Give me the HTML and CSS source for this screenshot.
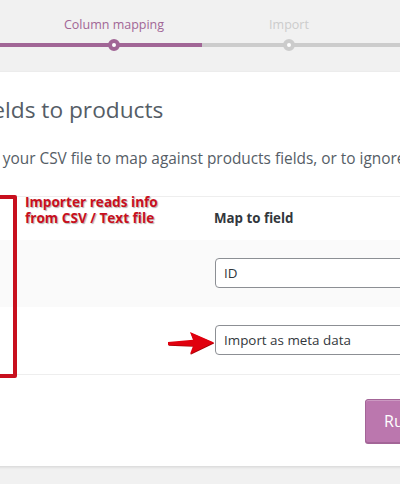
FILE: index.html
```html
<!DOCTYPE html>
<html lang="en">
<head>
<meta charset="utf-8">
<title>Product import - Column mapping</title>
<link rel="stylesheet" href="styles.css">
</head>
<body>
<div class="page">
  <ol class="steps">
    <li class="step done">Upload CSV file</li>
    <li class="step active">Column mapping</li>
    <li class="step">Import</li>
    <li class="step">Done!</li>
  </ol>

  <div class="card">
    <header class="card-head">
      <h2 class="title">Map CSV fields to products</h2>
      <p class="intro">Select fields from your CSV file to map against products fields, or to ignore during import.</p>
    </header>

    <table class="map">
      <thead>
        <tr>
          <th class="col-name">Column name</th>
          <th class="col-field">Map to field</th>
        </tr>
      </thead>
      <tbody>
        <tr class="odd">
          <td class="col-name"></td>
          <td class="col-field"><div class="select">ID</div></td>
        </tr>
        <tr>
          <td class="col-name"></td>
          <td class="col-field"><div class="select">Import as meta data</div></td>
        </tr>
      </tbody>
    </table>

    <div class="actions">
      <button class="btn" type="button">Run the importer</button>
    </div>
  </div>

  <div class="bracket"></div>
  <div class="note">Importer reads info<br>from CSV / Text file</div>
  <svg class="arrow" width="46" height="24" viewBox="0 0 46 24" aria-hidden="true">
    <polygon points="0,11 25,8.8 22,1 46,11.5 22,23 25,15 0,14" fill="#a80006" transform="translate(0.6,0.8)"/>
    <polygon points="0,11 25,8.8 22,1 46,11.5 22,23 25,15 0,14" fill="#e0000e"/>
  </svg>
</div>
</body>
</html>
```

FILE: styles.css
```css
*, *::before, *::after { box-sizing: border-box; }

html, body {
  margin: 0;
  padding: 0;
}

body {
  background: #f1f1f1;
  font-family: "Open Sans", "Noto Sans", sans-serif;
  color: #555d66;
  width: 400px;
  height: 484px;
  overflow: hidden;
}

.page {
  position: relative;
  width: 400px;
  height: 484px;
  overflow: hidden;
}

/* progress steps */
.steps {
  display: flex;
  list-style: none;
  margin: 0 0 0 -148.5px;
  padding: 16px 0 0;
  width: 700px;
}

.step {
  position: relative;
  flex: 0 0 175px;
  text-align: center;
  font-size: 12.5px;
  line-height: 18px;
  padding-bottom: 9px;
  border-bottom: 4px solid #cccccc;
  color: #cccccc;
}

.step::before {
  content: "";
  position: absolute;
  left: 50%;
  bottom: -8px;
  margin-left: -6px;
  width: 12px;
  height: 12px;
  border: 4px solid #cccccc;
  border-radius: 50%;
  background: #ffffff;
}

.step.active,
.step.done {
  border-bottom-color: #a16696;
  color: #a16696;
}

.step.active::before {
  border-color: #a16696;
}

.step.done::before {
  border-color: #a16696;
  background: #a16696;
}

/* card */
.card {
  margin: 25px 0 0 -144px;
  width: 700px;
  background: #ffffff;
  box-shadow: 0 1px 3px rgba(0, 0, 0, 0.13);
}

.card-head {
  padding: 24px 24px 0;
}

.title {
  margin: 0 0 24px;
  font-size: 22.7px;
  font-weight: 400;
  line-height: 27px;
  color: #555d66;
}

.intro {
  margin: 0 0 0 -5px;
  padding-bottom: 25px;
  font-size: 15.4px;
  line-height: 24px;
  color: #555d66;
}

/* mapping table */
.map {
  width: 100%;
  border-collapse: collapse;
  border-top: 1px solid #eeeeee;
  border-bottom: 1px solid #eeeeee;
}

.map th {
  text-align: left;
  font-size: 13.3px;
  font-weight: 700;
  color: #32373c;
  height: 43px;
  padding: 0 10px;
  vertical-align: middle;
}

.map td {
  padding: 18px 10px 19px;
  vertical-align: middle;
}

.map .col-name {
  width: 348px;
}

.map tr.odd td {
  background: #fafafa;
}

.select {
  height: 30px;
  margin-left: 1px;
  border: 1px solid #8c8f94;
  border-radius: 4px;
  background: #ffffff;
  padding: 0 8px;
  font-size: 13.4px;
  line-height: 28px;
  color: #32373c;
}

/* actions */
.actions {
  padding: 24px 24px 23px 509px;
}

.btn {
  height: 44px;
  padding: 0 18px;
  border: 1px solid #a36597;
  border-radius: 3px;
  background: #bb77ae;
  color: #ffffff;
  font-family: "Open Sans", "Noto Sans", sans-serif;
  font-size: 16px;
  box-shadow: inset 0 1px 0 rgba(255, 255, 255, 0.25), 0 1px 0 #a36597;
}

/* annotation overlay */
.bracket {
  position: absolute;
  left: -20px;
  top: 195px;
  width: 37px;
  height: 183px;
  border: 4px solid #c8101e;
  border-radius: 2px;
}

.note {
  position: absolute;
  left: 25px;
  top: 194px;
  font-family: "Open Sans", "Noto Sans", sans-serif;
  font-size: 13.6px;
  font-weight: 700;
  line-height: 16px;
  color: #c8101e;
  text-shadow: 1px 1px 1px rgba(0, 0, 0, 0.3);
}

.arrow {
  position: absolute;
  left: 168px;
  top: 331px;
}
```
